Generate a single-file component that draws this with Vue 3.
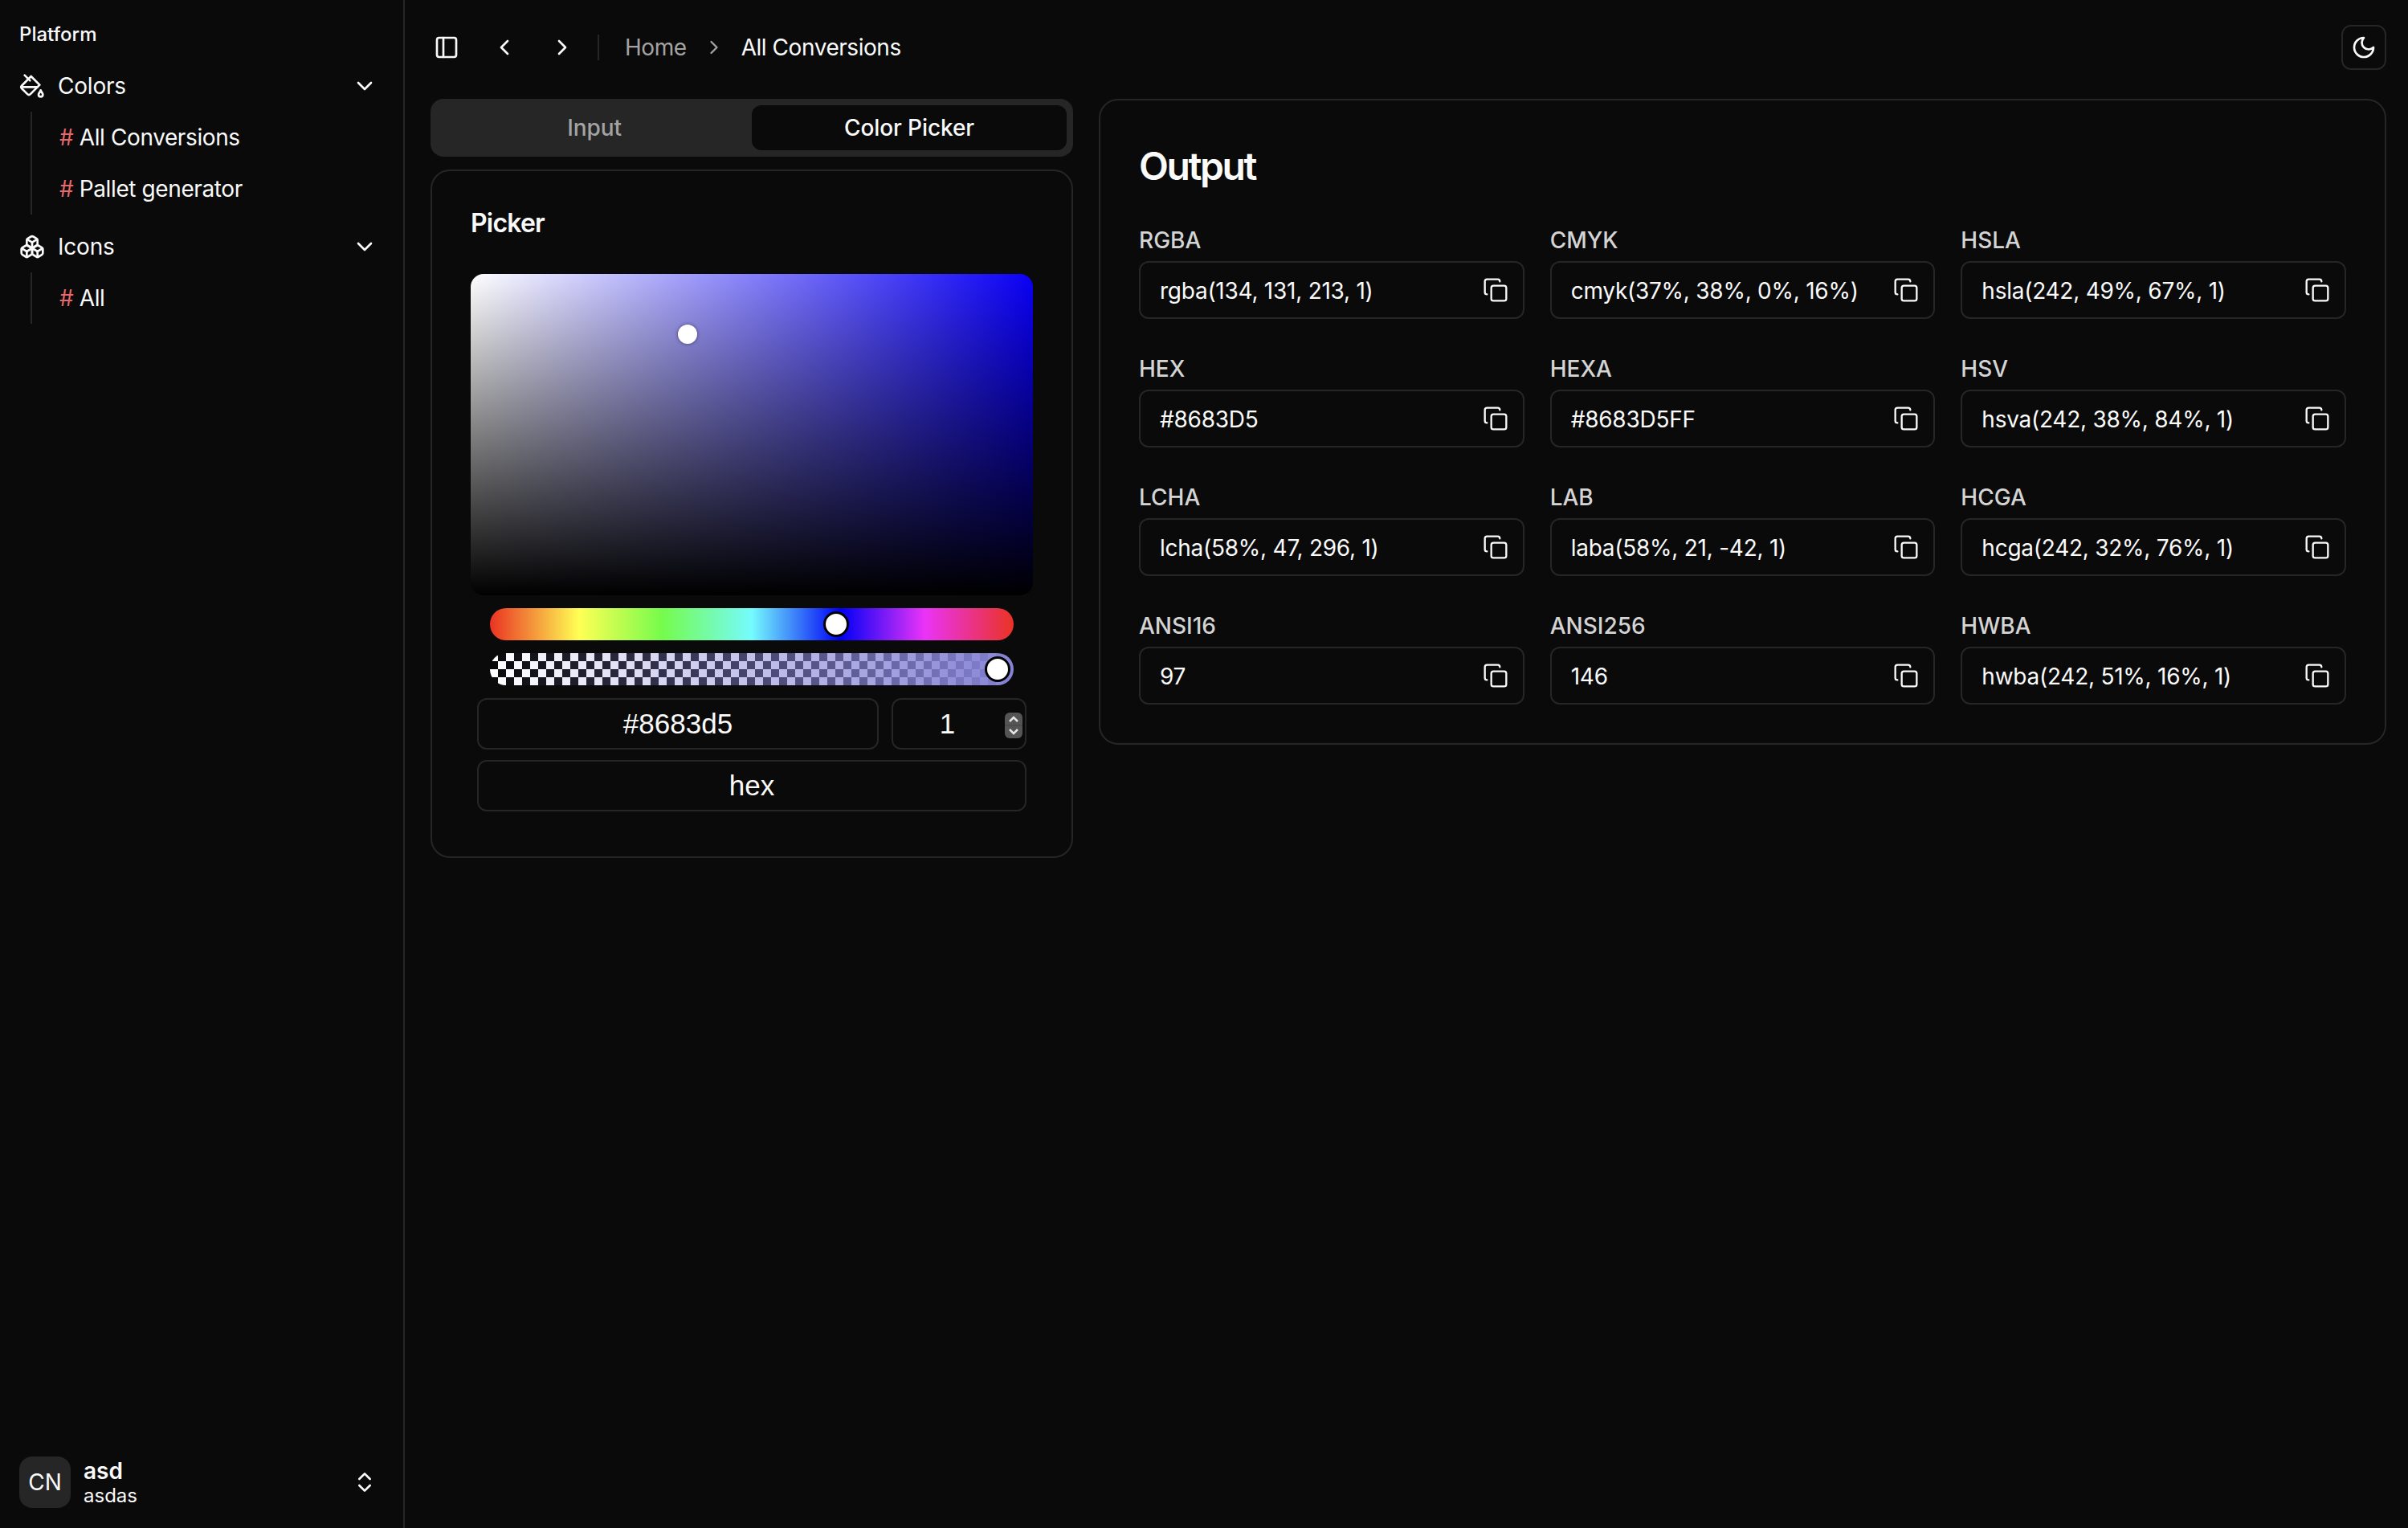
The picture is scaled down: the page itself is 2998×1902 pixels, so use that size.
<template>
  <div class="layout">
    <aside class="sidebar">
      <div class="group-label">Platform</div>

      <nav class="menu">
        <div v-for="group in navGroups" :key="group.title" class="menu-group">
          <div class="menu-row">
            <svg class="icon" viewBox="0 0 24 24">
              <path v-for="d in group.icon" :key="d" :d="d" />
            </svg>
            <span class="menu-title">{{ group.title }}</span>
            <svg class="icon" viewBox="0 0 24 24"><path d="m6 9 6 6 6-6" /></svg>
          </div>
          <div class="sub-menu">
            <div v-for="item in group.items" :key="item" class="sub-row">
              <span class="hash">#</span> {{ item }}
            </div>
          </div>
        </div>
      </nav>

      <div class="user-row">
        <div class="avatar">CN</div>
        <div class="user-info">
          <span class="user-name">asd</span>
          <span class="user-mail">asdas</span>
        </div>
        <svg class="icon" viewBox="0 0 24 24">
          <path d="m7 15 5 5 5-5" />
          <path d="m7 9 5-5 5 5" />
        </svg>
      </div>
    </aside>

    <main class="main">
      <header class="topbar">
        <button class="ghost-btn" type="button">
          <svg class="icon" viewBox="0 0 24 24">
            <rect x="3" y="3" width="18" height="18" rx="2" />
            <path d="M9 3v18" />
          </svg>
        </button>
        <button class="ghost-btn" type="button">
          <svg class="icon" viewBox="0 0 24 24"><path d="m15 18-6-6 6-6" /></svg>
        </button>
        <button class="ghost-btn" type="button">
          <svg class="icon" viewBox="0 0 24 24"><path d="m9 18 6-6-6-6" /></svg>
        </button>
        <div class="divider"></div>
        <div class="crumbs">
          <span class="crumb-muted">Home</span>
          <svg class="crumb-sep" viewBox="0 0 24 24"><path d="m9 18 6-6-6-6" /></svg>
          <span>All Conversions</span>
        </div>
        <button class="theme-btn" type="button">
          <svg class="icon" viewBox="0 0 24 24"><path d="M12 3a6 6 0 0 0 9 9 9 9 0 1 1-9-9Z" /></svg>
        </button>
      </header>

      <div class="content">
        <section class="left-col">
          <div class="tabs">
            <button
              v-for="tab in tabs"
              :key="tab"
              type="button"
              :class="['tab', { active: activeTab === tab }]"
              @click="activeTab = tab"
            >
              {{ tab }}
            </button>
          </div>

          <div class="card picker-card">
            <h3 class="picker-title">Picker</h3>
            <div class="saturation">
              <span class="sat-thumb"></span>
            </div>
            <div class="slider hue">
              <span class="slider-thumb hue-thumb"></span>
            </div>
            <div class="slider alpha">
              <span class="slider-thumb alpha-thumb"></span>
            </div>
            <div class="picker-fields">
              <div class="field hex-field">#8683d5</div>
              <div class="field num-field">
                <span class="num-value">1</span>
                <span class="stepper">
                  <svg viewBox="0 0 22 32">
                    <path class="stepper-line" d="M0 16h22" />
                    <path d="m6 11 5-5 5 5" />
                    <path d="m6 21 5 5 5-5" />
                  </svg>
                </span>
              </div>
              <div class="field mode-field">hex</div>
            </div>
          </div>
        </section>

        <section class="card output-card">
          <h2 class="output-title">Output</h2>
          <div class="output-grid">
            <div v-for="row in outputs" :key="row.label" class="output-item">
              <label class="output-label">{{ row.label }}</label>
              <div class="output-box">
                <span>{{ row.value }}</span>
                <svg class="icon copy-icon" viewBox="0 0 24 24">
                  <rect x="8" y="8" width="14" height="14" rx="2" />
                  <path d="M4 16c-1.1 0-2-.9-2-2V4c0-1.1.9-2 2-2h10c1.1 0 2 .9 2 2" />
                </svg>
              </div>
            </div>
          </div>
        </section>
      </div>
    </main>
  </div>
</template>

<script setup>
import { ref } from 'vue';

const tabs = ['Input', 'Color Picker'];
const activeTab = ref('Color Picker');

const navGroups = [
  {
    title: 'Colors',
    icon: [
      'm19 11-8-8-8.6 8.6a2 2 0 0 0 0 2.8l5.2 5.2c.8.8 2 .8 2.8 0L19 11Z',
      'm5 2 5 5',
      'M2 13h15',
      'M22 20a2 2 0 1 1-4 0c0-1.6 1.7-2.4 2-4 .3 1.6 2 2.4 2 4Z'
    ],
    items: ['All Conversions', 'Pallet generator']
  },
  {
    title: 'Icons',
    icon: [
      'M2.97 12.92A2 2 0 0 0 2 14.63v3.24a2 2 0 0 0 .97 1.71l3 1.8a2 2 0 0 0 2.06 0L12 19v-5.5l-5-3-4.03 2.42Z',
      'm7 16.5-4.74-2.85',
      'm7 16.5 5-3',
      'M7 16.5v5.17',
      'M12 13.5V19l3.97 2.38a2 2 0 0 0 2.06 0l3-1.8a2 2 0 0 0 .97-1.71v-3.24a2 2 0 0 0-.97-1.71L17 10.5l-5 3Z',
      'm17 16.5-5-3',
      'm17 16.5 4.74-2.85',
      'M17 16.5v5.17',
      'M7.97 4.42A2 2 0 0 0 7 6.13v4.37l5 3 5-3V6.13a2 2 0 0 0-.97-1.71l-3-1.8a2 2 0 0 0-2.06 0l-3 1.8Z',
      'M12 8 7.26 5.15',
      'm12 8 4.74-2.85',
      'M12 13.5V8'
    ],
    items: ['All']
  }
];

const outputs = [
  { label: 'RGBA', value: 'rgba(134, 131, 213, 1)' },
  { label: 'CMYK', value: 'cmyk(37%, 38%, 0%, 16%)' },
  { label: 'HSLA', value: 'hsla(242, 49%, 67%, 1)' },
  { label: 'HEX', value: '#8683D5' },
  { label: 'HEXA', value: '#8683D5FF' },
  { label: 'HSV', value: 'hsva(242, 38%, 84%, 1)' },
  { label: 'LCHA', value: 'lcha(58%, 47, 296, 1)' },
  { label: 'LAB', value: 'laba(58%, 21, -42, 1)' },
  { label: 'HCGA', value: 'hcga(242, 32%, 76%, 1)' },
  { label: 'ANSI16', value: '97' },
  { label: 'ANSI256', value: '146' },
  { label: 'HWBA', value: 'hwba(242, 51%, 16%, 1)' }
];
</script>

<style>
html,
body {
  background: #0a0a0a;
}
</style>

<style scoped>
.layout {
  display: flex;
  height: 1902px;
  background: #0a0a0a;
  color: #fafafa;
  font-family: Inter, "Liberation Sans", sans-serif;
  font-size: 28px;
}

.icon {
  flex-shrink: 0;
  width: 32px;
  height: 32px;
  fill: none;
  stroke: currentColor;
  stroke-width: 2;
  stroke-linecap: round;
  stroke-linejoin: round;
}

/* sidebar */
.sidebar {
  width: 504px;
  box-sizing: border-box;
  flex-shrink: 0;
  display: flex;
  flex-direction: column;
  padding: 10px 16px 17px;
  border-right: 2px solid #262626;
}

.group-label {
  height: 65px;
  padding-left: 8px;
  display: flex;
  align-items: center;
  font-size: 24px;
  font-weight: 500;
}

.menu {
  flex: 1;
  display: flex;
  flex-direction: column;
  gap: 8px;
}

.menu-row {
  height: 64px;
  padding: 0 16px 0 8px;
  display: flex;
  align-items: center;
  gap: 16px;
}

.menu-title {
  flex: 1;
  letter-spacing: -0.2px;
}

.sub-menu {
  margin-left: 22px;
  padding: 4px 0 4px 34px;
  border-left: 2px solid #262626;
  display: flex;
  flex-direction: column;
  gap: 8px;
}

.sub-row {
  height: 56px;
  display: flex;
  align-items: center;
  white-space: pre;
  letter-spacing: -0.4px;
}

.hash {
  color: #e5696a;
}

.user-row {
  height: 80px;
  padding: 0 16px 0 8px;
  display: flex;
  align-items: center;
  gap: 16px;
}

.avatar {
  width: 64px;
  height: 64px;
  border-radius: 16px;
  background: #262626;
  display: flex;
  align-items: center;
  justify-content: center;
}

.user-info {
  flex: 1;
  display: flex;
  flex-direction: column;
}

.user-name {
  font-weight: 600;
  line-height: 34px;
}

.user-mail {
  font-size: 24px;
  line-height: 28px;
}

/* top bar */
.main {
  flex: 1;
  min-width: 0;
}

.topbar {
  height: 118px;
  box-sizing: border-box;
  padding: 0 27px 0 24px;
  display: flex;
  align-items: center;
  gap: 16px;
}

.ghost-btn {
  width: 56px;
  height: 56px;
  padding: 0;
  border: none;
  background: none;
  color: #fafafa;
  display: flex;
  align-items: center;
  justify-content: center;
}

.divider {
  width: 2px;
  height: 32px;
  background: #262626;
  margin-right: 16px;
}

.crumbs {
  flex: 1;
  display: flex;
  align-items: center;
  gap: 20px;
  letter-spacing: -0.45px;
}

.crumb-muted {
  color: #a3a3a3;
}

.crumb-sep {
  width: 28px;
  height: 28px;
  fill: none;
  stroke: #a3a3a3;
  stroke-width: 2;
  stroke-linecap: round;
  stroke-linejoin: round;
}

.theme-btn {
  width: 56px;
  height: 56px;
  padding: 0;
  border: 2px solid #262626;
  border-radius: 12px;
  background: #0a0a0a;
  color: #fafafa;
  display: flex;
  align-items: center;
  justify-content: center;
}

/* content */
.content {
  padding: 5px 27px 0 32px;
  display: grid;
  grid-template-columns: 800px 1603px;
  gap: 32px;
  align-items: start;
}

.left-col {
  display: flex;
  flex-direction: column;
  gap: 16px;
}

.tabs {
  height: 72px;
  box-sizing: border-box;
  padding: 8px;
  border-radius: 16px;
  background: #262626;
  display: grid;
  grid-template-columns: 1fr 1fr;
}

.tab {
  border: none;
  border-radius: 12px;
  background: none;
  color: #a3a3a3;
  font: inherit;
  font-weight: 500;
  letter-spacing: -0.1px;
}

.tab.active {
  background: #0a0a0a;
  color: #fafafa;
}

.card {
  border: 2px solid #262626;
  border-radius: 24px;
  background: #0a0a0a;
  padding: 48px;
}

.picker-card {
  padding-bottom: 56px;
  display: flex;
  flex-direction: column;
  gap: 16px;
}

.picker-title {
  margin: 0 0 30px;
  font-size: 32px;
  line-height: 34px;
  font-weight: 600;
  letter-spacing: -0.8px;
}

.saturation {
  position: relative;
  height: 400px;
  border-radius: 16px;
  background:
    linear-gradient(to top, #000, transparent),
    linear-gradient(to right, #fff, #0a00f5);
}

.sat-thumb {
  position: absolute;
  left: 258px;
  top: 63px;
  width: 24px;
  height: 24px;
  border-radius: 50%;
  background: #fff;
  box-shadow: 0 0 4px rgba(0, 0, 0, 0.5);
}

.slider {
  position: relative;
  height: 40px;
  margin: 0 24px;
  border-radius: 20px;
}

.hue {
  background: linear-gradient(
    to right,
    #ea3323,
    #ffff54 17%,
    #75fb4c 33%,
    #75fbfd 50%,
    #0000f5 67%,
    #ea33f7 83%,
    #ea3323
  );
}

.alpha {
  overflow: hidden;
  background:
    linear-gradient(to right, rgba(134, 131, 213, 0), #8683d5),
    repeating-conic-gradient(#0a0a0a 0 25%, #fff 0 50%) 0 0 / 20px 20px;
}

.slider-thumb {
  position: absolute;
  top: 4px;
  width: 32px;
  height: 32px;
  box-sizing: border-box;
  border: 3px solid #000;
  border-radius: 50%;
  background: #fff;
}

.hue-thumb {
  left: 415px;
}

.alpha-thumb {
  left: 616px;
}

.picker-fields {
  margin: 0 8px;
  display: grid;
  grid-template-columns: 1fr 168px;
  gap: 13px 16px;
  font-family: "Liberation Sans", Arial, sans-serif;
  font-size: 35px;
}

.field {
  height: 64px;
  box-sizing: border-box;
  border: 2px solid #262626;
  border-radius: 12px;
  display: flex;
  align-items: center;
  justify-content: center;
}

.num-field {
  position: relative;
}

.num-value {
  margin-right: 29px;
}

.stepper {
  position: absolute;
  right: 3px;
  top: 16px;
  width: 22px;
  height: 32px;
  border-radius: 6px;
  overflow: hidden;
  background: #555;
}

.stepper svg {
  display: block;
  width: 22px;
  height: 32px;
  fill: none;
  stroke: #e5e5e5;
  stroke-width: 2.5;
}

.stepper .stepper-line {
  stroke: #444;
  stroke-width: 1;
}

.mode-field {
  grid-column: 1 / 3;
}

/* output */
.output-title {
  margin: 0 0 44px;
  font-size: 48px;
  line-height: 68px;
  font-weight: 600;
  letter-spacing: -2.4px;
}

.output-grid {
  display: grid;
  grid-template-columns: repeat(3, 1fr);
  gap: 48px 32px;
}

.output-label {
  display: block;
  margin-bottom: 12px;
  line-height: 28px;
  font-weight: 500;
  color: #d4d4d4;
}

.output-box {
  height: 72px;
  box-sizing: border-box;
  padding: 1px 18px 0 24px;
  border: 2px solid #262626;
  border-radius: 12px;
  display: flex;
  align-items: center;
  justify-content: space-between;
  letter-spacing: -0.25px;
}

.copy-icon {
  margin-top: -1px;
  stroke-width: 1.75;
}
</style>
